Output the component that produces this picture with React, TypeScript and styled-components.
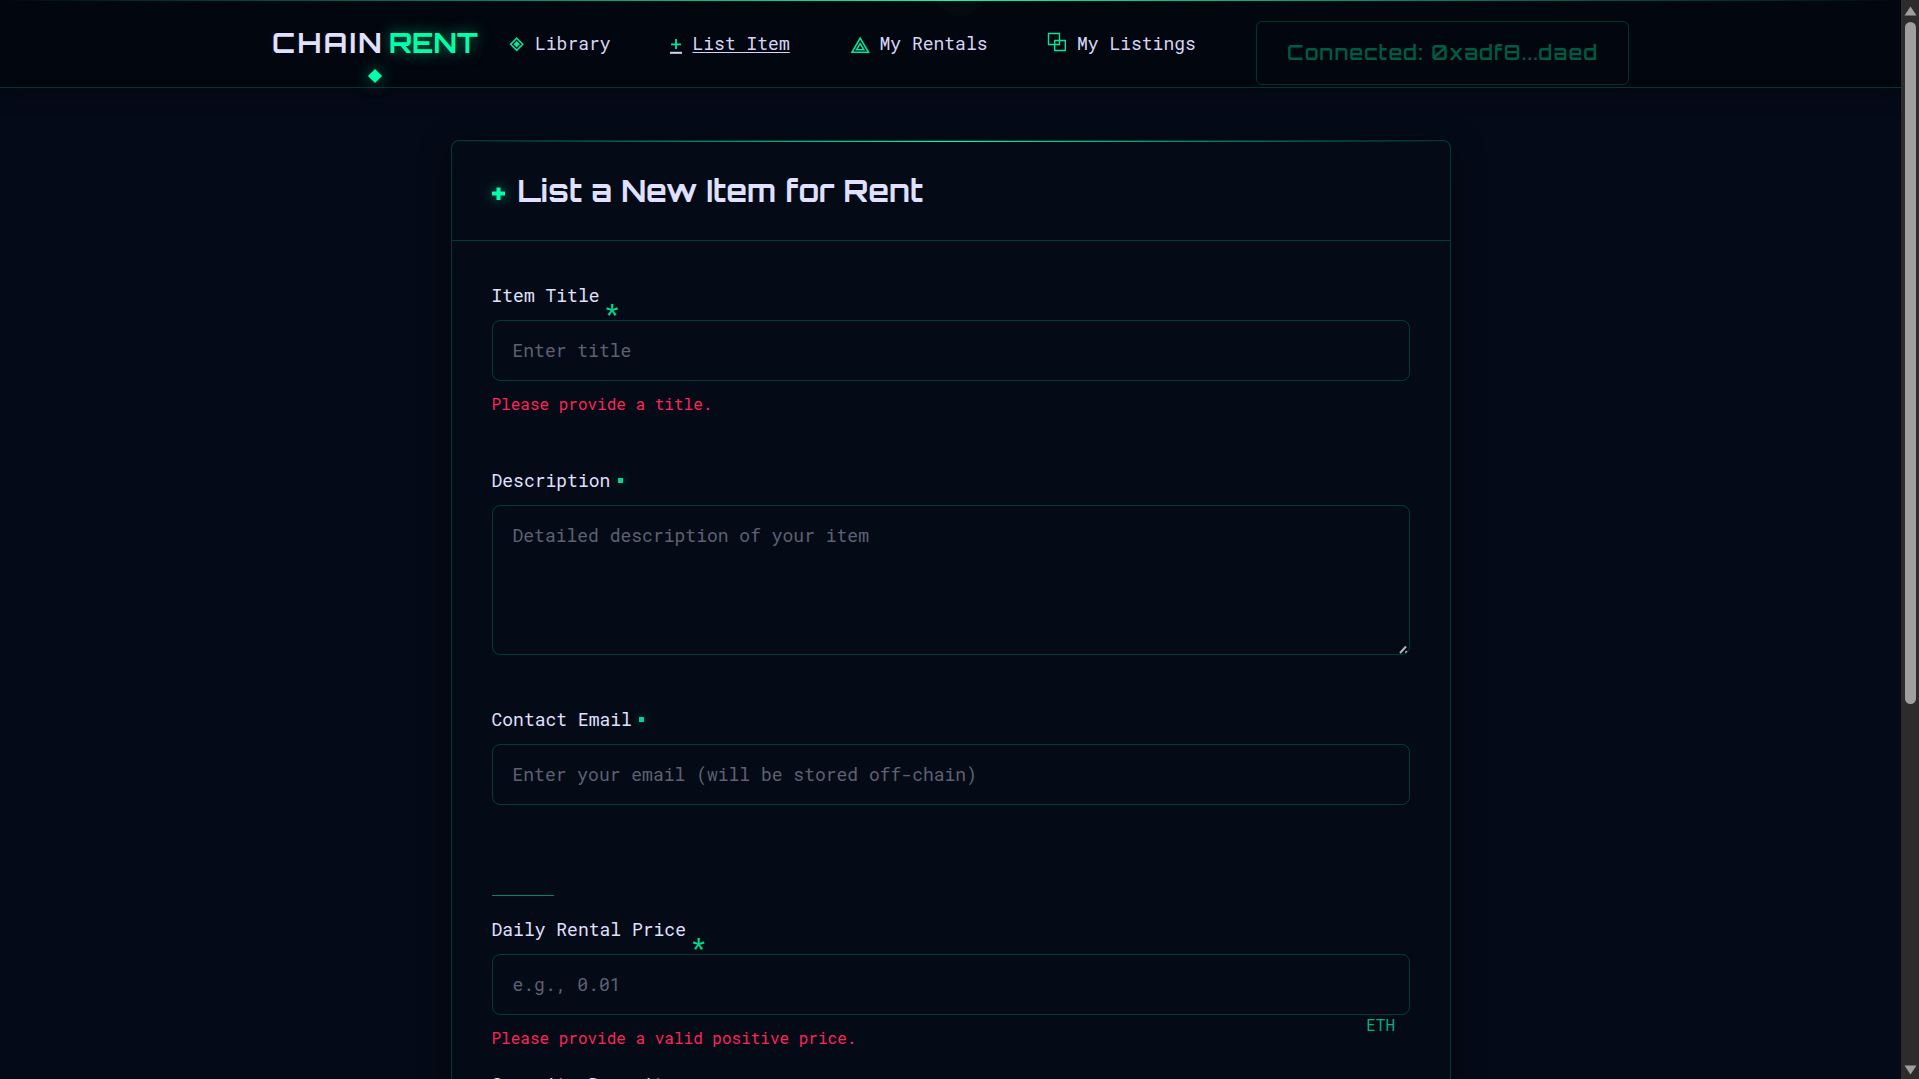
import React from "react";
import styled, { createGlobalStyle } from "styled-components";

const MONO = '"Roboto Mono", "DejaVu Sans Mono", monospace';
const DISPLAY = 'Orbitron, "DejaVu Sans", sans-serif';
const GREEN = "#00ffaa";
const LINE = "rgba(0, 255, 170, 0.2)";
const TEXT = "#e0e0ff";

const Global = createGlobalStyle`
  html, body { margin: 0; height: 100%; overflow: hidden; background: #040a17; }
  * { box-sizing: border-box; }
`;

const Screen = styled.div`
  display: flex;
  height: 1079px;
  overflow: hidden;
  color: ${TEXT};
  font: 18px/27px ${MONO};
  background: #040a17;
`;

const Page = styled.div`
  flex: 1;
  min-width: 0;
  display: flex;
  flex-direction: column;
  align-items: center;
  overflow: hidden;
`;

const Header = styled.header`
  position: relative;
  flex: none;
  width: 100%;
  height: 88px;
  display: flex;
  align-items: flex-start;
  padding-left: 272px;
  background: #02060f;
  border-bottom: 1px solid ${LINE};
  box-shadow: 0 4px 20px rgba(0, 0, 0, 0.35);
  &::before {
    content: "";
    position: absolute;
    inset: 0 0 auto;
    height: 1px;
    background: linear-gradient(90deg, transparent, ${GREEN}, transparent);
  }
`;

const Brand = styled.div`
  position: relative;
  width: 236px;
  height: 87px;
  padding-top: 25px;
  display: grid;
  grid-template-columns: 117px 119px;
  font: 700 28px/36px ${DISPLAY};
  &::after {
    content: "";
    position: absolute;
    left: 98px;
    top: 71px;
    width: 10px;
    height: 10px;
    background: ${GREEN};
    transform: rotate(45deg);
    box-shadow: 0 0 15px rgba(0, 255, 170, 0.5);
  }
`;

const BrandName = styled.span`
  letter-spacing: 2.5px;
`;

const BrandAccent = styled.span`
  color: ${GREEN};
  text-shadow: 0 0 15px rgba(0, 255, 170, 0.5);
`;

const NavLink = styled.a<{ $width: number; $gap: number; $active?: boolean }>`
  display: flex;
  width: ${(p) => p.$width}px;
  padding-top: 30px;
  gap: ${(p) => p.$gap}px;
  white-space: nowrap;
  font-weight: 450;
  color: #d5d5f4;
  text-decoration: ${(p) => (p.$active ? "underline" : "none")};
  text-decoration-thickness: 1px;
  text-underline-offset: 2px;
  svg { flex: none; display: block; }
`;

const Wallet = styled.button`
  width: 373px;
  height: 64px;
  margin-top: 21px;
  padding: 0 0 0 30px;
  border: 1px solid rgba(0, 255, 170, 0.18);
  border-radius: 6px;
  background: transparent;
  color: #005a44;
  font: 600 20px/60px ${DISPLAY};
  letter-spacing: 1.25px;
  text-align: left;
  white-space: nowrap;
`;

const Card = styled.section`
  position: relative;
  flex: none;
  width: 1000px;
  height: 1100px;
  margin: 52px 0 0 1px;
  border: 1px solid ${LINE};
  border-radius: 8px;
  background: #040b17;
  box-shadow: 0 10px 30px rgba(0, 0, 0, 0.5);
  &::before {
    content: "";
    position: absolute;
    inset: 0 0 auto;
    height: 1px;
    background: linear-gradient(90deg, transparent, ${GREEN}, transparent);
  }
`;

const CardHead = styled.div`
  display: flex;
  align-items: center;
  height: 100px;
  padding-left: 40px;
  border-bottom: 1px solid ${LINE};
`;

const Plus = styled.svg`
  width: 13px;
  height: 13px;
  margin: 5px 12.5px 0 0;
  overflow: visible;
  filter: drop-shadow(0 0 6px rgba(0, 255, 170, 0.5));
`;

const Title = styled.h1`
  margin: 1px 0 0;
  font: 700 30px/40px ${DISPLAY};
`;

const Form = styled.form`
  padding: 41px 40px 0;
`;

const Field = styled.div<{ $height: number }>`
  position: relative;
  height: ${(p) => p.$height}px;
`;

const Label = styled.label`
  display: flex;
  align-items: center;
  height: 27px;
  margin: 0 0 11px -0.5px;
`;

const Star = styled.span`
  color: #00d68f;
  padding: 33px 0 0 5px;
  font-size: 24px;
  font-weight: 500;
`;

const Dot = styled.span`
  width: 5px;
  height: 5px;
  margin-left: 7.5px;
  background: #00d68f;
  box-shadow: 0 0 10px rgba(0, 255, 170, 0.3);
`;

const Input = styled.input`
  display: block;
  width: 918px;
  height: 61px;
  padding: 0 19.5px 2px;
  border: 1px solid ${LINE};
  border-radius: 8px;
  outline: none;
  background: transparent;
  color: ${TEXT};
  font: 18px ${MONO};
  &::placeholder { color: #5e6172; opacity: 1; }
`;

const Area = styled(Input).attrs({ as: "textarea" })`
  height: 150px;
  padding: 16px 19.5px;
  line-height: 27px;
  resize: none;
`;

const Grip = styled.svg`
  position: absolute;
  right: 2px;
  bottom: 1px;
`;

const AreaWrap = styled.div`
  position: relative;
  width: 918px;
  height: 150px;
`;

const ErrorText = styled.div`
  margin: 11px 0 0 -0.5px;
  font-size: 16px;
  line-height: 24px;
  color: #ff2457;
`;

const Unit = styled.span`
  position: absolute;
  right: 15px;
  top: 97px;
  font-size: 16px;
  line-height: 24px;
  color: #00b47c;
`;

const Rule = styled.div`
  width: 62px;
  height: 1px;
  margin-bottom: 20px;
  background: rgba(0, 255, 170, 0.5);
`;

const Scroll = styled.div`
  width: 18px;
  flex: none;
  display: flex;
  flex-direction: column;
  align-items: center;
  padding: 6px 0 4px 1px;
  background: #2c2c2c;
  svg { display: block; }
`;

const Thumb = styled.div`
  width: 11px;
  height: 682px;
  margin: 6px 0 auto;
  border-radius: 6px;
  background: #9f9f9f;
`;

const Orb = styled.div`
  position: absolute;
  left: 933px;
  top: -38px;
  width: 54px;
  height: 54px;
  border-radius: 50%;
  background: rgba(255, 255, 255, 0.015);
`;

export default function App() {
  return (
    <Screen>
      <Global />
      <Page>
        <Header>
          <Orb />
          <Brand>
            <BrandName>CHAIN</BrandName>
            <BrandAccent>RENT</BrandAccent>
          </Brand>
          <NavLink $width={161} $gap={9}>
            <svg width="18" height="28" viewBox="0 0 18 28" fill="none" stroke="#00e69a" strokeWidth="1.6">
              <path d="M8.7 8.2L14.7 14.3L8.7 20.4L2.7 14.3Z" />
              <path d="M8.7 11L12 14.3L8.7 17.6L5.4 14.3Z" fill="#00e69a" stroke="none" />
            </svg>
            Library
          </NavLink>
          <NavLink $width={180} $gap={10.5} $active>
            <svg width="13" height="28" viewBox="0 0 13 28" fill="none">
              <path d="M7 9V19M2 14.4H12" stroke="#00e69a" strokeWidth="1.8" />
              <path d="M1 22.8H13" stroke="#d5d5f4" strokeWidth="2" />
            </svg>
            List Item
          </NavLink>
          <NavLink $width={198} $gap={9.5}>
            <svg width="21" height="28" viewBox="0 0 21 28" fill="none" stroke="#00e69a" strokeWidth="1.6">
              <path d="M11.2 8.2L19.5 22.3H3Z M11.2 13.6L14.8 19.8H7.6Z" />
            </svg>
            My Rentals
          </NavLink>
          <NavLink $width={209} $gap={11}>
            <svg width="19" height="28" viewBox="0 0 19 28" fill="none" stroke="#00e69a" strokeWidth="1.4">
              <path d="M1.5 3.5H12.5V14.5H1.5Z M7.7 10.5H18.3V20.5H7.7Z" />
            </svg>
            My Listings
          </NavLink>
          <Wallet>Connected: 0xadf8...daed</Wallet>
        </Header>
        <Card>
          <CardHead>
            <Plus viewBox="0 0 13 13"><path d="M4.5 0.5H8.5V4.5H13V8.5H8.5V13H4.5V8.5H0V4.5H4.5Z" fill={GREEN} /></Plus>
            <Title>List a New Item for Rent</Title>
          </CardHead>
          <Form>
            <Field $height={185}>
              <Label>Item Title<Star>*</Star></Label>
              <Input placeholder="Enter title" />
              <ErrorText>Please provide a title.</ErrorText>
            </Field>
            <Field $height={239}>
              <Label>Description<Dot /></Label>
              <AreaWrap>
                <Area placeholder="Detailed description of your item" />
                <Grip width="9" height="9" viewBox="0 0 9 9" stroke="#b4b4b4" strokeWidth="2"><path d="M1 8L7 1.5" /><path d="M6.2 7.8L8 6" strokeWidth="1.3" /></Grip>
              </AreaWrap>
            </Field>
            <Field $height={189}>
              <Label>Contact Email<Dot /></Label>
              <Input placeholder="Enter your email (will be stored off-chain)" />
            </Field>
            <Rule />
            <Field $height={155}>
              <Label>Daily Rental Price<Star>*</Star></Label>
              <Input placeholder="e.g., 0.01" />
              <Unit>ETH</Unit>
              <ErrorText>Please provide a valid positive price.</ErrorText>
            </Field>
            <Label>Security Deposit</Label>
          </Form>
        </Card>
      </Page>
      <Scroll>
        <svg width="13" height="10" viewBox="0 0 13 10"><path d="M6.5 0.5L12.5 9.5H0.5Z" fill="#9f9f9f" /></svg>
        <Thumb />
        <svg width="13" height="10" viewBox="0 0 13 10"><path d="M6.5 9.5L12.5 0.5H0.5Z" fill="#9f9f9f" /></svg>
      </Scroll>
    </Screen>
  );
}
